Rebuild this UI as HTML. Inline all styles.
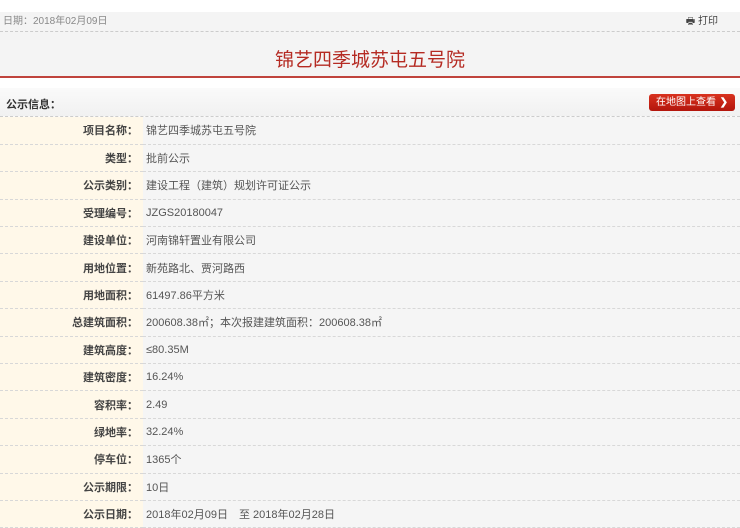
<!DOCTYPE html>
<html><head><meta charset="utf-8"><style>
*{margin:0;padding:0;box-sizing:border-box}
body{width:740px;height:528px;overflow:hidden;background:#fff;font-family:"Liberation Sans","Noto Sans CJK SC",sans-serif;font-size:11px;color:#555}
.top{position:absolute;top:12px;left:0;width:740px;height:64px;background:#f4f4f4}
.date{position:absolute;top:0;left:3px;height:19px;line-height:19px;color:#888;font-size:10px}
.print{position:absolute;top:0;right:22px;line-height:19px;color:#444;font-size:10px}
.dl{position:absolute;top:19px;left:0;width:740px;border-top:1px dashed #ccc}
.title{position:absolute;top:33px;left:0;width:740px;text-align:center;font-size:19px;color:#b52b23}
.red{position:absolute;top:76px;left:0;width:740px;height:2px;background:#c0433c}
.sec{position:absolute;top:88px;left:0;width:740px;height:29px;background:linear-gradient(#fafafa,#f1f1f1);border-bottom:1px dashed #ccc}
.sec b{position:absolute;left:6px;top:8px;font-size:11px;color:#333}
.btn{position:absolute;right:5px;top:6px;width:86px;height:17px;border-radius:3px;background:linear-gradient(#d8321f,#b3150c);color:#fff;font-size:10px;line-height:17px;padding-left:7px}
.btn span{position:absolute;right:7px;top:0;font-weight:bold}
table{position:absolute;top:117px;left:0;width:740px;border-collapse:collapse}
td{height:27.4px;border-bottom:1px dashed #d8d8d8;padding:0}
td.l{width:143px;background:#fff8e9;text-align:right;padding-right:5px;font-weight:bold;color:#444}
td.v{background:#f5f5f5;padding-left:3px;color:#555}
</style></head><body>
<div class="top">
<div class="date">日期：2018年02月09日</div>
<div class="print">🖶 打印</div>
<div class="dl"></div>
<div class="title">锦艺四季城苏屯五号院</div>
</div>
<div class="red"></div>
<div class="sec"><b>公示信息：</b><div class="btn">在地图上查看<span>❯</span></div></div>
<table>
<tr><td class="l">项目名称：</td><td class="v">锦艺四季城苏屯五号院</td></tr>
<tr><td class="l">类型：</td><td class="v">批前公示</td></tr>
<tr><td class="l">公示类别：</td><td class="v">建设工程（建筑）规划许可证公示</td></tr>
<tr><td class="l">受理编号：</td><td class="v">JZGS20180047</td></tr>
<tr><td class="l">建设单位：</td><td class="v">河南锦轩置业有限公司</td></tr>
<tr><td class="l">用地位置：</td><td class="v">新苑路北、贾河路西</td></tr>
<tr><td class="l">用地面积：</td><td class="v">61497.86平方米</td></tr>
<tr><td class="l">总建筑面积：</td><td class="v">200608.38㎡；本次报建建筑面积：200608.38㎡</td></tr>
<tr><td class="l">建筑高度：</td><td class="v">≤80.35M</td></tr>
<tr><td class="l">建筑密度：</td><td class="v">16.24%</td></tr>
<tr><td class="l">容积率：</td><td class="v">2.49</td></tr>
<tr><td class="l">绿地率：</td><td class="v">32.24%</td></tr>
<tr><td class="l">停车位：</td><td class="v">1365个</td></tr>
<tr><td class="l">公示期限：</td><td class="v">10日</td></tr>
<tr><td class="l">公示日期：</td><td class="v">2018年02月09日　至 2018年02月28日</td></tr>
</table>
</body></html>
